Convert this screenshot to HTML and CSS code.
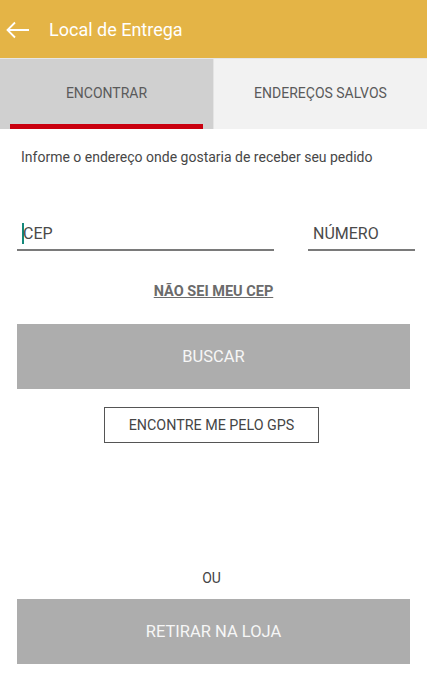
FILE: index.html
```html
<!DOCTYPE html>
<html lang="pt-BR">
<head>
  <meta charset="UTF-8" />
  <meta name="viewport" content="width=device-width, initial-scale=1.0"/>
  <title>Local de Entrega</title>
  <link rel="stylesheet" href="styles.css">
</head>
<body>
  <header class="toolbar">
    <svg class="back-icon" width="24" height="18" viewBox="0 0 24 18">
      <path d="M23 9H2M9 1.5L1.5 9L9 16.5" fill="none" stroke="#fff" stroke-width="1.8"/>
    </svg>
    <h1>Local de Entrega</h1>
  </header>

  <nav class="tabs">
    <div class="tab active">ENCONTRAR</div>
    <div class="tab">ENDEREÇOS SALVOS</div>
  </nav>

  <main class="content">
    <p class="hint">Informe o endereço onde gostaria de receber seu pedido</p>

    <div class="fields">
      <div class="field cep"><span class="cursor"></span>CEP</div>
      <div class="field numero">NÚMERO</div>
    </div>

    <a class="link" href="#">NÃO SEI MEU CEP</a>

    <button class="btn-block">BUSCAR</button>

    <button class="btn-outline">ENCONTRE ME PELO GPS</button>

    <div class="spacer"></div>

    <p class="or">OU</p>
    <button class="btn-block">RETIRAR NA LOJA</button>
  </main>
</body>
</html>
```

FILE: styles.css
```css
body {
  margin: 0;
  width: 427px;
  height: 675px;
  font-family: Roboto, 'Liberation Sans', sans-serif;
  background-color: #ffffff;
  display: flex;
  flex-direction: column;
}

.toolbar {
  height: 58px;
  background-color: #e4b446;
  display: flex;
  align-items: center;
  padding-left: 6px;
  box-sizing: border-box;
}

.back-icon {
  margin-top: 2px;
}

.toolbar h1 {
  margin: 0 0 0 19px;
  font-size: 18px;
  font-weight: normal;
  color: #ffffff;
}

.tabs {
  display: flex;
  height: 71px;
  border-top: 1px solid #e6e6e6;
  box-sizing: border-box;
}

.tab {
  flex: 1;
  display: flex;
  align-items: center;
  justify-content: center;
  font-size: 14px;
  color: #5a5a5a;
  background-color: #f2f2f2;
  padding-bottom: 2px;
  position: relative;
}

.tab.active {
  background-color: #d0d0d0;
  border-right: 1px solid #e4e4e4;
}

.tab.active::after {
  content: "";
  position: absolute;
  left: 10px;
  right: 10px;
  bottom: 0;
  height: 5px;
  background-color: #c9000f;
}

.content {
  flex: 1;
  display: flex;
  flex-direction: column;
  padding: 0 17px 11px;
}

.hint {
  margin: 20px 0 0 4px;
  font-size: 14px;
  color: #474747;
}

.fields {
  display: flex;
  justify-content: space-between;
  margin-top: 51px;
}

.field {
  height: 35px;
  border-bottom: 2px solid #7a7a7a;
  font-size: 16px;
  color: #4a4a4a;
  display: flex;
  align-items: center;
  box-sizing: border-box;
  padding-top: 2px;
}

.field.cep {
  width: 257px;
  padding-left: 5px;
}

.field.numero {
  width: 107px;
  margin-right: -5px;
  padding-left: 5px;
}

.cursor {
  width: 2px;
  height: 21px;
  background-color: #14887a;
  margin-right: -1px;
}

.link {
  align-self: center;
  margin-top: 32px;
  font-size: 14.5px;
  font-weight: bold;
  color: #6b6b6b;
}

.btn-block {
  margin-top: 24px;
  height: 65px;
  width: 393px;
  border: none;
  background-color: #adadad;
  color: #f6f6f6;
  font-family: inherit;
  font-size: 16.5px;
}

.btn-outline {
  align-self: center;
  margin-top: 18px;
  margin-left: -4px;
  width: 215px;
  height: 36px;
  border: 1px solid #555555;
  background-color: #ffffff;
  color: #454545;
  font-family: inherit;
  font-size: 14.3px;
}

.spacer {
  flex: 1;
}

.or {
  margin: 0;
  align-self: center;
  font-size: 14px;
  color: #444444;
  margin-left: -4px;
}

.or + .btn-block {
  margin-top: 13px;
}
```
